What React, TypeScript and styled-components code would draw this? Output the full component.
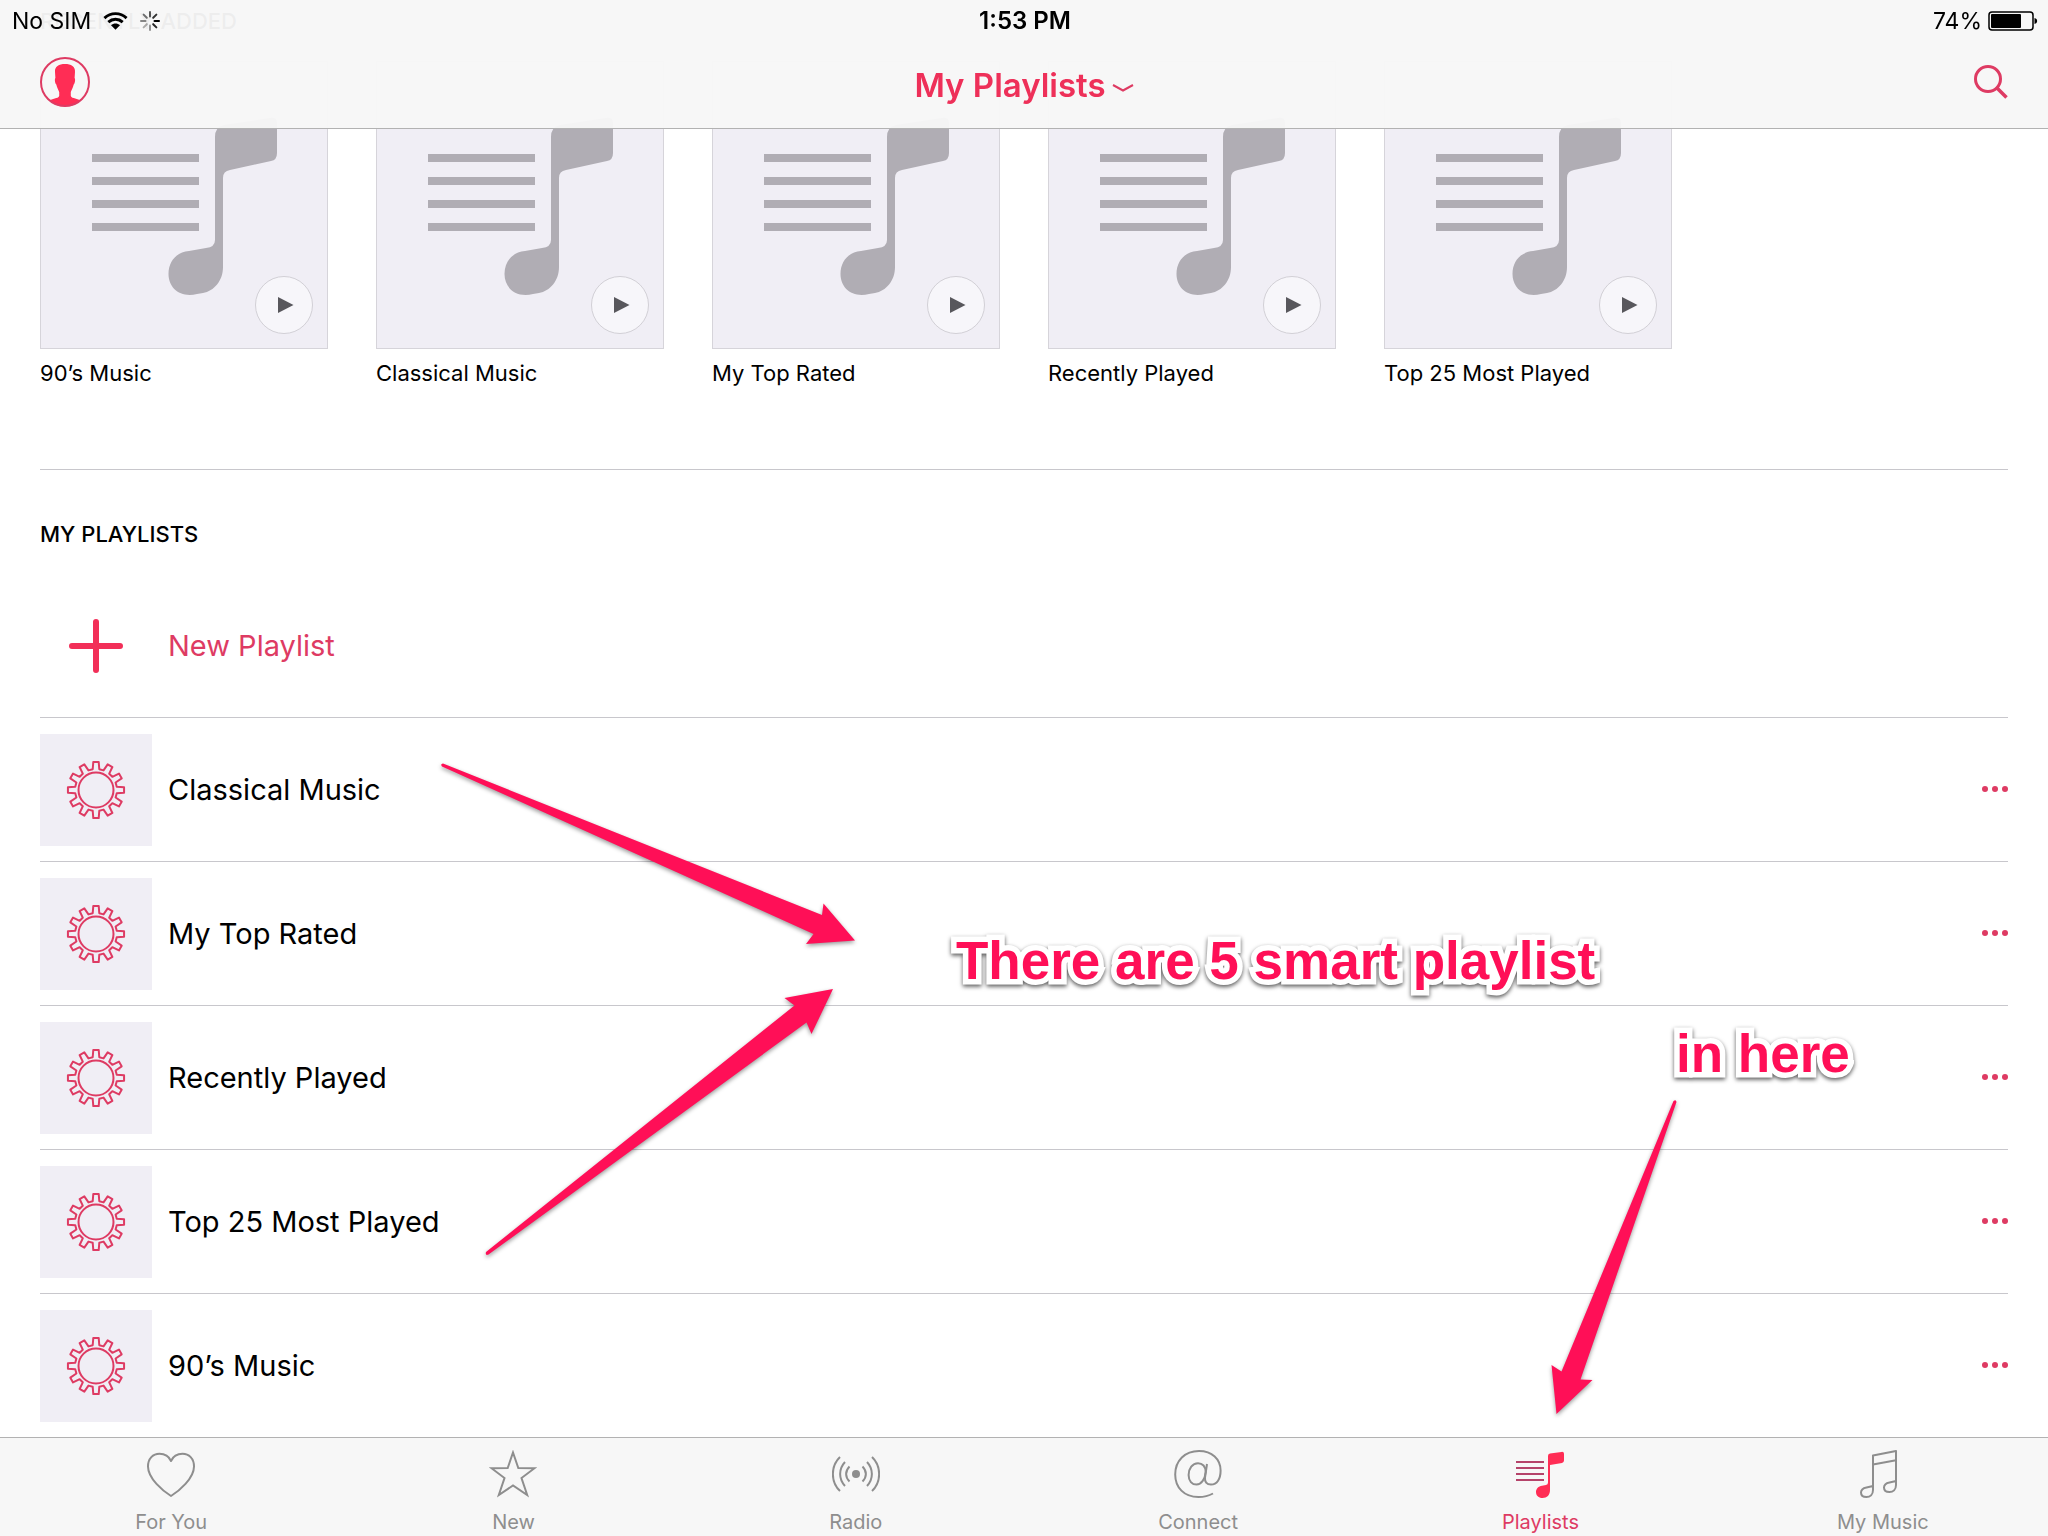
import React from "react";
import styled, { createGlobalStyle } from "styled-components";

const PINK = "#ff2d55";
const ROSE = "#de3b63";
const MARK = "#ff0f57";
const HAIRLINE = "#c8c7cc";
const ART = "#b0adb4";
const TILE = "#f0eef5";
const GRAY = "#8e8e8e";

const GlobalStyle = createGlobalStyle`
  *, *::before, *::after { box-sizing: border-box; }
  body {
    margin: 0;
    background: #fff;
    color: #000;
    font-family: Inter, "Liberation Sans", sans-serif;
    -webkit-font-smoothing: antialiased;
  }
  h1, h2, p, ul { margin: 0; padding: 0; }
  ul { list-style: none; }
  button {
    margin: 0;
    padding: 0;
    border: 0;
    background: none;
    color: inherit;
    font: inherit;
    cursor: pointer;
  }
  svg { display: block; }
`;

const Screen = styled.div`
  position: relative;
  min-height: 100vh;
  display: flex;
  flex-direction: column;
`;

/* Translucent bar that the content scrolls beneath */
const TopBar = styled.header`
  position: fixed;
  inset: 0 0 auto;
  z-index: 2;
  background: rgba(247, 247, 247, 0.96);
  border-bottom: 1px solid #b2b2b2;
`;

const StatusRow = styled.div`
  display: grid;
  grid-template-columns: 1fr auto 1fr;
  align-items: center;
  height: 42px;
  padding: 0 10px 0 12px;
  font-size: 23px;
  line-height: 42px;
`;

const StatusGroup = styled.div<{ $end?: boolean }>`
  display: flex;
  align-items: center;
  justify-content: ${(p) => (p.$end ? "flex-end" : "flex-start")};
  gap: ${(p) => (p.$end ? "6px" : "12px")};
`;

const Clock = styled.time`
  font-size: 24px;
  font-weight: 600;
`;

const NavRow = styled.div`
  display: grid;
  grid-template-columns: 1fr auto 1fr;
  align-items: center;
  height: 86px;
  padding: 0 40px;
  color: ${PINK};
`;

const IconButton = styled.button<{ $end?: boolean }>`
  justify-self: ${(p) => (p.$end ? "end" : "start")};
  padding-bottom: 6px;
`;

const TitleButton = styled.button`
  display: flex;
  align-items: center;
  gap: 6px;
  color: #ee3059;
  font-size: 33px;
  font-weight: 600;
  line-height: 40px;
`;

const Content = styled.main`
  flex: 1;
  padding: 7px 40px 0;
`;

const Recent = styled.section`
  padding-bottom: 82px;
  border-bottom: 1px solid ${HAIRLINE};
`;

const Library = styled.section`
  padding-top: 50px;
`;

const SectionTitle = styled.h2`
  margin-bottom: 26px;
  font-size: 22px;
  font-weight: 500;
  line-height: 28px;
  text-transform: uppercase;
`;

const CardGrid = styled.ul`
  display: grid;
  grid-template-columns: repeat(6, 1fr);
  gap: 48px;
`;

const Cover = styled.div`
  position: relative;
  aspect-ratio: 1;
  border: 1px solid #d6d4da;
  background: ${TILE};

  > svg { width: 100%; height: 100%; }
`;

const PlayButton = styled.button`
  position: absolute;
  right: 14px;
  bottom: 14px;
  width: 58px;
  height: 58px;
  border: 1px solid #d2d0d6;
  border-radius: 50%;
  background: #f7f6fa;
`;

const CardName = styled.p`
  margin-top: 10px;
  font-size: 22px;
  line-height: 28px;
`;

const Row = styled.li<{ $accent?: boolean }>`
  display: flex;
  align-items: center;
  gap: 16px;
  min-height: 144px;
  border-bottom: 1px solid ${HAIRLINE};
  color: ${(p) => (p.$accent ? ROSE : "#000")};
  font-size: 29px;
  line-height: 40px;

  &:last-child {
    min-height: 143px;
    border-bottom: 0;
  }
`;

const Thumb = styled.span<{ $plain?: boolean }>`
  display: grid;
  place-items: center;
  width: 112px;
  height: 112px;
  background: ${(p) => (p.$plain ? "transparent" : TILE)};
`;

const NewButton = styled.button`
  display: flex;
  align-items: center;
  gap: 16px;
`;

const RowName = styled.span`
  flex: 1;
`;

const MoreButton = styled.button`
  display: flex;
  gap: 4px;
  padding: 20px 0 22px;

  &::before, &::after, span {
    content: "";
    width: 6px;
    height: 6px;
    border-radius: 50%;
    background: ${ROSE};
  }
`;

const TabBar = styled.nav`
  display: grid;
  grid-template-columns: repeat(6, calc(100% / 6 + 1px));
  overflow: hidden;
  border-top: 1px solid #b2b2b2;
  background: #f7f7f7;
`;

const Tab = styled.a<{ $active?: boolean }>`
  display: flex;
  flex-direction: column;
  align-items: center;
  gap: 10px;
  padding-top: 12px;
  color: ${(p) => (p.$active ? ROSE : GRAY)};
  font-size: 20px;
  line-height: 28px;
  text-decoration: none;
`;

/* Marker layer drawn over the screen */
const Markup = styled.div`
  position: absolute;
  inset: 0;
  z-index: 3;
  pointer-events: none;

  svg { filter: drop-shadow(0 2px 2px rgba(0, 0, 0, 0.4)); }
`;

const Callout = styled.p<{ $x: number; $y: number }>`
  position: absolute;
  left: ${(p) => p.$x}px;
  top: ${(p) => p.$y}px;
  color: ${MARK};
  font-family: "Liberation Sans", Arial, sans-serif;
  font-size: 53px;
  font-weight: 700;
  line-height: 60px;
  white-space: nowrap;
  -webkit-text-stroke: 11px #fff;
  paint-order: stroke fill;
  filter: drop-shadow(0 2px 2px rgba(0, 0, 0, 0.65));
`;

function Wifi() {
  return (
    <svg width="25" height="20" viewBox="0 0 26 20" fill="none" stroke="#000" strokeWidth="3">
      <path d="M1.5 7 C8 .8 18 .8 24.500 7" />
      <path d="M5.500 11.200 C10 7.200 16 7.200 20.500 11.200" />
      <path d="M13 19 L8.300 14.300 C11 12 15 12 17.700 14.300z" fill="#000" stroke="none" />
    </svg>
  );
}

const SPOKES = [0.65, 0.8, 1, 0.85, 0.4, 0.3, 0.45, 0.55];

function Spinner() {
  return (
    <svg width="20" height="20" viewBox="-10 -10 20 20" stroke="#000" strokeWidth="2" strokeLinecap="round">
      {SPOKES.map((o, i) => (
        <line key={i} x1="0" y1="-4.500" x2="0" y2="-9" opacity={o} transform={`rotate(${i * 45})`} />
      ))}
    </svg>
  );
}

function Battery() {
  return (
    <svg width="50" height="20" viewBox="0 0 50 20">
      <rect x="1" y="1" width="44" height="18" rx="3" fill="none" stroke="#000" strokeWidth="1.500" />
      <rect x="3" y="3" width="30" height="14" rx="1" />
      <path d="M46.500 7 C50 7.500 50 12.500 46.500 13z" />
    </svg>
  );
}

function Avatar() {
  return (
    <svg width="50" height="50" viewBox="0 0 50 50">
      <clipPath id="avatar-clip">
        <circle cx="25" cy="25" r="24.500" />
      </clipPath>
      <path
        clipPath="url(#avatar-clip)"
        fill={PINK}
        d="M25 7 C31 7 35.500 9.500 35 15 L34.600 21 C35.600 21.500 35 27 33.700 27.500 C33 31 31.500 33 30.800 35 L30.800 39 C32 42 38 41 41 44 L41 50 L9 50 L9 44 C12 41 18 42 19.200 39 L19.200 35 C18.500 33 17 31 16.300 27.500 C15 27 14.400 21.500 15.400 21 L15 15 C14.500 9.500 19 7 25 7z"
      />
      <circle cx="25" cy="25" r="24" fill="none" stroke={ROSE} strokeWidth="2" />
    </svg>
  );
}

function Search() {
  return (
    <svg width="34" height="34" viewBox="0 0 34 34" fill="none" stroke={ROSE} strokeWidth="3">
      <circle cx="14" cy="14" r="12.500" />
      <path d="M23 23 L32.500 32.500" strokeWidth="3.500" />
    </svg>
  );
}

function ChevronDown() {
  return (
    <svg width="22" height="14" viewBox="0 -6 22 14" fill="none" stroke={ROSE} strokeWidth="2">
      <path d="M1 1 L11 6.500 L21 1" />
    </svg>
  );
}

function PlaylistArt() {
  return (
    <svg viewBox="1 1 286 286" fill={ART}>
      {[93, 116, 139, 162].map((y) => (
        <rect key={y} x="52" y={y} width="107" height="8" />
      ))}
      <path d="M175 76 Q175 66 184 64 L230 57 Q237 56 237 62 L237 92 Q237 99 231 100 L190 109 Q183 110 183 117 L183 206 C183 220 174 230 163 232 L157 233 C140 237 128.500 227 128.500 213 C128.500 200 137 191 149 190 L166 187 Q175 186 175 179z" />
    </svg>
  );
}

function PlayGlyph() {
  return (
    <svg width="56" height="56" viewBox="0 0 56 56" fill="#58575c">
      <path d="M22 20 L37.500 28 L22 36z" />
    </svg>
  );
}

const TEETH = 12;

function gearPath() {
  const at = (r: number, deg: number) => {
    const a = ((deg - 90) * Math.PI) / 180;
    return `${(30 + r * Math.cos(a)).toFixed(2)} ${(30 + r * Math.sin(a)).toFixed(2)}`;
  };
  const pts: string[] = [];
  for (let i = 0; i < TEETH; i++) {
    const c = (i * 360) / TEETH;
    pts.push(at(21, c - 9), at(28.2, c - 5.5), at(28.2, c + 5.5), at(21, c + 9));
  }
  return `M${pts.join(" L")}z`;
}

const GEAR = gearPath();

function Gear() {
  return (
    <svg width="60" height="60" viewBox="0 0 60 60" fill="none" stroke={ROSE} strokeWidth="2" strokeLinejoin="round">
      <path d={GEAR} />
      <circle cx="30" cy="30" r="17.500" />
    </svg>
  );
}

function Plus() {
  return (
    <svg width="54" height="54" viewBox="0 0 54 54" stroke="#f22f58" strokeWidth="6" strokeLinecap="round">
      <path d="M27 3 V51 M3 27 H51" />
    </svg>
  );
}

const line = { fill: "none", stroke: "currentColor", strokeWidth: 2 } as const;

const tabs = [
  {
    name: "For You",
    icon: (
      <path
        {...line}
        strokeLinejoin="round"
        d="M24 46 C16 41 1 28.500 1 16.500 C1 8.500 6 3.800 12.500 3.800 C18 3.800 22 6.500 24 11 C26 6.500 30 3.800 35.500 3.800 C42 3.800 47 8.500 47 16.500 C47 28.500 32 41 24 46z"
      />
    ),
  },
  {
    name: "New",
    icon: (
      <path
        {...line}
        d="M24 2.500 L29.300 18 L45.500 18.200 L32.500 28 L38.200 45 L24 35.500 L9.800 45 L15.500 28 L2.500 18.200 L18.700 18z"
      />
    ),
  },
  {
    name: "Radio",
    icon: (
      <g {...line}>
        <circle cx="24" cy="24" r="4" fill="currentColor" stroke="none" />
        <path d="M8 7 C-1.500 16 -1.500 32 8 41 M13 12 C6.500 19 6.500 29 13 36 M17.500 16.500 C13 21 13 27 17.500 31.500" />
        <path d="M40 7 C49.500 16 49.500 32 40 41 M35 12 C41.500 19 41.500 29 35 36 M30.500 16.500 C35 21 35 27 30.500 31.500" />
      </g>
    ),
  },
  {
    name: "Connect",
    icon: (
      <g {...line}>
        <path d="M39 43.500 C34 46.300 29 47 24.500 47 C10 47 1.200 37.500 1.200 24.500 C1.200 10.500 11 1 25 1 C38 1 46.600 9 46.600 20.500 C46.600 29 43 34.600 37 34.600 C32.500 34.600 30.600 31.500 31 27.500 L33 14" />
        <path d="M31.700 22 C31.700 16.500 28.500 13.200 24 13.200 C18.500 13.200 14.600 18.500 14.600 25 C14.600 31 18 34.600 22.500 34.600 C27.500 34.600 31 29 31.700 22z" />
      </g>
    ),
  },
  {
    name: "Playlists",
    active: true,
    icon: (
      <>
        <path d="M0 12 H28 M0 18 H28 M0 24 H28 M0 30 H28" stroke="#b5436a" strokeWidth="2" />
        <path
          fill={PINK}
          d="M32 6 Q32 4 34 3.600 L45.500 1.900 Q48 1.600 48 3.800 L48 10.500 Q48 12.500 46 12.900 L34 15 L34 40 C34 45 31 48 26.500 48 C22.500 48 20 45.500 20 42 C20 38.500 22.500 36.300 26 35.700 L30 35 Q32 34.700 32 32.500z"
        />
      </>
    ),
  },
  {
    name: "My Music",
    icon: (
      <g {...line} strokeLinejoin="round">
        <path d="M14 36 V5.500 L37 1 V35 C37 39.500 34 42 30.500 42 C27 42 25 40.300 25 37.500 C25 34.500 27.500 33 30.500 32.400 L37 31" />
        <path d="M14 14.500 L37 10.200" />
        <path d="M14 35.500 V40 C14 44.500 11 47 7.500 47 C4 47 2 45.300 2 42.500 C2 39.500 4.500 38 7.500 37.400 L14 36" />
      </g>
    ),
  },
];

const recent = ["90’s Music", "Classical Music", "My Top Rated", "Recently Played", "Top 25 Most Played"];
const playlists = ["Classical Music", "My Top Rated", "Recently Played", "Top 25 Most Played", "90’s Music"];

export default function App() {
  return (
    <Screen>
      <GlobalStyle />
      <TopBar>
        <StatusRow>
          <StatusGroup>
            <span>No SIM</span>
            <Wifi />
            <Spinner />
          </StatusGroup>
          <Clock>1:53 PM</Clock>
          <StatusGroup $end>
            <span>74%</span>
            <Battery />
          </StatusGroup>
        </StatusRow>
        <NavRow>
          <IconButton aria-label="Account">
            <Avatar />
          </IconButton>
          <h1>
            <TitleButton>
              My Playlists
              <ChevronDown />
            </TitleButton>
          </h1>
          <IconButton $end aria-label="Search">
            <Search />
          </IconButton>
        </NavRow>
      </TopBar>

      <Content>
        <Recent>
          <SectionTitle>Recently Added</SectionTitle>
          <CardGrid>
            {recent.map((name) => (
              <li key={name}>
                <Cover>
                  <PlaylistArt />
                  <PlayButton aria-label={`Play ${name}`}>
                    <PlayGlyph />
                  </PlayButton>
                </Cover>
                <CardName>{name}</CardName>
              </li>
            ))}
          </CardGrid>
        </Recent>

        <Library>
          <SectionTitle>My Playlists</SectionTitle>
          <ul>
            <Row $accent>
              <NewButton>
                <Thumb $plain>
                  <Plus />
                </Thumb>
                New Playlist
              </NewButton>
            </Row>
            {playlists.map((name) => (
              <Row key={name}>
                <Thumb>
                  <Gear />
                </Thumb>
                <RowName>{name}</RowName>
                <MoreButton aria-label={`More options for ${name}`}>
                  <span />
                </MoreButton>
              </Row>
            ))}
          </ul>
        </Library>
      </Content>

      <TabBar>
        {tabs.map((tab) => (
          <Tab key={tab.name} href="#" $active={tab.active} aria-current={tab.active ? "page" : undefined}>
            <svg width="48" height="48" viewBox="0 0 48 48">
              {tab.icon}
            </svg>
            {tab.name}
          </Tab>
        ))}
      </TabBar>

      <Markup>
        <svg width="2048" height="1536" viewBox="0 0 2048 1536" fill={MARK}>
          <path d="M443 763.500 L822 915 L823.500 903.500 L855 940.500 L806 944 L813.500 934 L442 766.500 Q440 764 443 763.500z" />
          <path d="M486 1252 L794.500 1005.500 L784.500 998 L833 989 L811.500 1034 L806.500 1022.500 L488.500 1254.500 Q485 1256 486 1252z" />
          <path d="M1673.500 1101 L1561.500 1371.500 L1551.500 1365 L1556.500 1414 L1592.500 1380 L1580.500 1379.500 L1676.500 1102 Q1676 1099 1673.500 1101z" />
        </svg>
        <Callout $x={956} $y={931}>There are 5 smart playlist</Callout>
        <Callout $x={1676} $y={1024}>in here</Callout>
      </Markup>
    </Screen>
  );
}
